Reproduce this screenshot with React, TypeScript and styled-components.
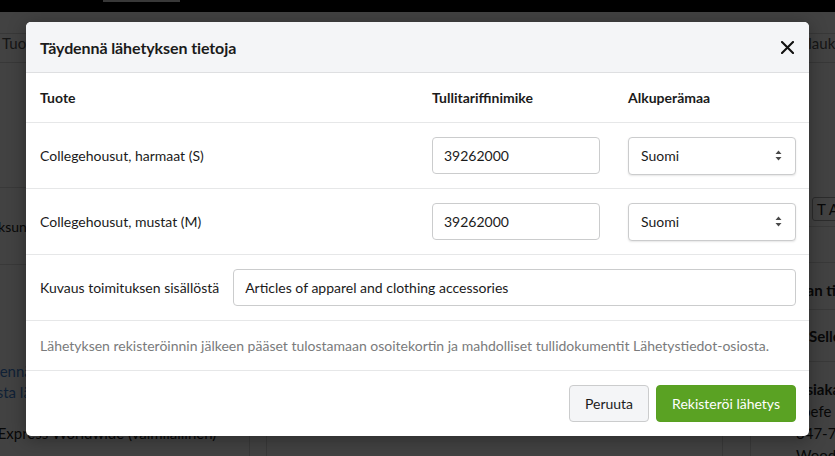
import styled, { createGlobalStyle } from 'styled-components'

const GlobalStyle = createGlobalStyle`
	html, body {
		margin: 0;
		padding: 0;
	}
	body {
		font-family: Lato, 'Open Sans', sans-serif;
		font-size: 14px;
		color: #222;
		background: #fff;
		overflow: hidden;
	}
	* {
		box-sizing: border-box;
	}
`

type Product = {
	name: string
	tariff: string
	origin: string
}

const products: Product[] = [
	{ name: 'Collegehousut, harmaat (S)', tariff: '39262000', origin: 'Suomi' },
	{ name: 'Collegehousut, mustat (M)', tariff: '39262000', origin: 'Suomi' },
]

/* page behind the dialog */

const Page = styled.div`
	position: relative;
	width: 835px;
	height: 456px;
	overflow: hidden;
	background: #fff;
`

const TopNav = styled.div`
	height: 12px;
	background: #000;
	padding-left: 103px;
`

const NavMark = styled.div`
	width: 77px;
	height: 2px;
	background: #d8d8d8;
`

const TabBar = styled.div`
	margin-top: 21px;
	height: 30px;
	display: flex;
	align-items: flex-start;
	justify-content: space-between;
	padding: 0 0 0 2px;
	border-top: 1px solid #d6d6d6;
	border-bottom: 1px solid #d6d6d6;
	color: #555;
	font-size: 15px;
	white-space: nowrap;
`

const Tab = styled.span<{ $overflow?: boolean }>`
	margin-right: ${(p) => (p.$overflow ? '-20px' : '0')};
`

const Columns = styled.div`
	display: grid;
	grid-template-columns: 298px 501px 1fr;
	margin-left: -48px;
	height: 400px;
	white-space: nowrap;
`

const LeftCol = styled.div`
	border-right: 1px solid #ddd;
	display: flex;
	flex-direction: column;
`

const LeftBlock = styled.div<{ $h: number }>`
	height: ${(p) => p.$h}px;
	display: flex;
	align-items: center;
	padding-left: 4px;
	border-bottom: 1px solid #ddd;
`

const LeftList = styled.div`
	display: flex;
	flex-direction: column;
	padding: 96px 0 0 17px;
	line-height: 20.5px;
	font-size: 15px;
`

const BgLink = styled.span`
	color: #3f7fd0;
`

const CenterCol = styled.div`
	padding: 372px 27px 0 16px;
	border-right: 1px solid #ddd;
`

const InnerCard = styled.div`
	height: 60px;
	border: 1px solid #ddd;
`

const RightCol = styled.div`
	display: flex;
	flex-direction: column;
	font-size: 15px;
`

const RightBlock = styled.div<{ $h: number; $top?: number; $indent?: number }>`
	height: ${(p) => p.$h}px;
	padding-top: ${(p) => p.$top ?? 0}px;
	padding-left: ${(p) => p.$indent ?? 0}px;
	line-height: 20px;
	font-weight: 700;
	border-bottom: 1px solid #ddd;
`

const ButtonRow = styled.div`
	height: 164px;
	display: flex;
	align-items: flex-end;
	padding: 0 0 5px 61px;
	border-bottom: 1px solid #ddd;
`

const SmallButton = styled.span`
	padding: 2px 4px;
	border: 1px solid #aaa;
	border-radius: 3px;
	font-weight: 400;
`

const RightText = styled.div`
	line-height: 22px;
	padding: 16px 0 0 45px;
`

const CustomerName = styled.div`
	font-weight: 700;
`

const Backdrop = styled.div`
	position: absolute;
	inset: 0;
	background: rgba(0, 0, 0, 0.74);
`

/* dialog */

const Dialog = styled.div`
	position: absolute;
	top: 22px;
	left: 26px;
	width: 783px;
	background: #fff;
	border-radius: 5px;
	overflow: hidden;
	box-shadow: 0 3px 18px rgba(0, 0, 0, 0.35);
`

const DialogHeader = styled.div`
	height: 51px;
	display: flex;
	align-items: center;
	justify-content: space-between;
	padding: 0 14px 0 14px;
	background: #f4f5f7;
	border-bottom: 1px solid #dedfe1;
`

const Title = styled.h2`
	margin: 0;
	font-size: 16px;
	font-weight: 700;
	color: #1b1b1b;
	letter-spacing: -0.1px;
`

const CloseButton = styled.button`
	width: 16px;
	height: 16px;
	padding: 0;
	border: 0;
	background: none;
	display: flex;
	align-items: center;
	justify-content: center;
	cursor: pointer;
`

const Row = styled.div<{ $h: number }>`
	display: grid;
	grid-template-columns: 1fr 168px 168px;
	column-gap: 28px;
	align-items: center;
	height: ${(p) => p.$h}px;
	padding: 0 13px 0 14px;
	border-bottom: 1px solid #e6e7e8;
`

const HeadCell = styled.div`
	font-weight: 700;
	color: #1b1b1b;
`

const Cell = styled.div`
	color: #1b1b1b;
`

const TextInput = styled.input`
	width: 100%;
	height: 37px;
	padding: 0 11px;
	border: 1px solid #cbcccd;
	border-radius: 4px;
	font-family: inherit;
	font-size: 14px;
	color: #1b1b1b;
	background: #fff;
	outline: none;
`

const SelectBox = styled.div`
	height: 38px;
	display: flex;
	align-items: center;
	justify-content: space-between;
	padding: 0 13px 0 12px;
	border: 1px solid #cbcccd;
	border-radius: 4px;
	box-shadow: 0 1px 2px rgba(0, 0, 0, 0.1);
	background: #fff;
	color: #1b1b1b;
`

const DescRow = styled.div`
	display: flex;
	align-items: center;
	gap: 14px;
	height: 66px;
	padding: 0 13px 0 14px;
	border-bottom: 1px solid #e6e7e8;
`

const DescLabel = styled.label`
	white-space: nowrap;
	color: #1b1b1b;
`

const NoteRow = styled.div`
	height: 50px;
	display: flex;
	align-items: center;
	padding: 0 14px;
	font-size: 14px;
	color: #7a7b7c;
	border-bottom: 1px solid #e6e7e8;
	white-space: nowrap;
`

const Footer = styled.div`
	height: 65px;
	display: flex;
	align-items: center;
	justify-content: flex-end;
	gap: 7px;
	padding: 0 13px;
`

const Button = styled.button<{ $primary?: boolean }>`
	height: 37px;
	padding: 0 15px;
	border-radius: 4px;
	font-family: inherit;
	font-size: 14px;
	cursor: pointer;
	border: 1px solid ${(p) => (p.$primary ? '#58a021' : '#cbcccd')};
	background: ${(p) => (p.$primary ? '#5aa223' : '#f4f5f7')};
	color: ${(p) => (p.$primary ? '#fff' : '#1b1b1b')};
`

const SortCaret = () => (
	<svg width="7" height="11" viewBox="0 0 7 11">
		<path d="M3.5 0.5 L6.5 4 L0.5 4 Z M3.5 10.5 L6.5 7 L0.5 7 Z" fill="#4a4a4a" />
	</svg>
)

export default function App() {
	return (
		<>
			<GlobalStyle />
			<Page>
				<TopNav>
					<NavMark />
				</TopNav>
				<TabBar>
					<Tab>Tuotteet</Tab>
					<Tab $overflow>Tilaukset</Tab>
				</TabBar>
				<Columns>
					<LeftCol>
						<LeftBlock $h={125} />
						<LeftBlock $h={77}>Lisämaksun</LeftBlock>
						<LeftList>
							<BgLink>Täydennä tiedot</BgLink>
							<BgLink>Tulosta lähetyslista</BgLink>
							<span>DHL</span>
							<span>Intl. Express Worldwide (valmiiallinen)</span>
						</LeftList>
					</LeftCol>
					<CenterCol>
						<InnerCard />
					</CenterCol>
					<RightCol>
						<ButtonRow>
							<SmallButton>T Arkistoi</SmallButton>
						</ButtonRow>
						<RightBlock $h={36} />
						<RightBlock $h={47} $top={17} $indent={8}>
							Maksajan tiedot
						</RightBlock>
						<RightBlock $h={52} $top={16} $indent={58}>
							Seller
						</RightBlock>
						<RightText>
							<CustomerName>Asiakas</CustomerName>
							<div>Joefe Smith</div>
							<div>347-7690</div>
							<div>Wood</div>
						</RightText>
					</RightCol>
				</Columns>
				<Backdrop />
				<Dialog role="dialog">
					<DialogHeader>
						<Title>Täydennä lähetyksen tietoja</Title>
						<CloseButton aria-label="Sulje">
							<svg width="13" height="13" viewBox="0 0 13 13">
								<path d="M1 1 L12 12 M12 1 L1 12" stroke="#111" strokeWidth="2.1" strokeLinecap="round" />
							</svg>
						</CloseButton>
					</DialogHeader>
					<Row $h={50}>
						<HeadCell>Tuote</HeadCell>
						<HeadCell>Tullitariffinimike</HeadCell>
						<HeadCell>Alkuperämaa</HeadCell>
					</Row>
					{products.map((p) => (
						<Row $h={66} key={p.name}>
							<Cell>{p.name}</Cell>
							<TextInput defaultValue={p.tariff} />
							<SelectBox>
								<span>{p.origin}</span>
								<SortCaret />
							</SelectBox>
						</Row>
					))}
					<DescRow>
						<DescLabel>Kuvaus toimituksen sisällöstä</DescLabel>
						<TextInput defaultValue="Articles of apparel and clothing accessories" />
					</DescRow>
					<NoteRow>
						Lähetyksen rekisteröinnin jälkeen pääset tulostamaan osoitekortin ja mahdolliset tullidokumentit
						Lähetystiedot-osiosta.
					</NoteRow>
					<Footer>
						<Button>Peruuta</Button>
						<Button $primary>Rekisteröi lähetys</Button>
					</Footer>
				</Dialog>
			</Page>
		</>
	)
}
